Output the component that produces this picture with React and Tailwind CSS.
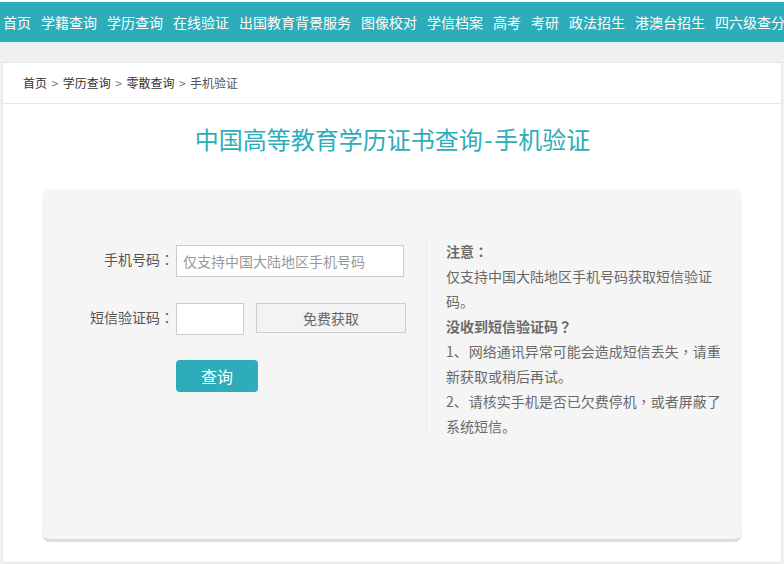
const nav = ["首页","学籍查询","学历查询","在线验证","出国教育背景服务","图像校对","学信档案","高考","考研","政法招生","港澳台招生","四六级查分"];
const font = { fontFamily: '"Noto Sans CJK SC", sans-serif' };

function P({ children }) {
  return <span className="font-['Noto_Sans_CJK_TC',sans-serif]">{children}</span>;
}

export default function App() {
  return (
    <div className="w-[784px] h-[564px] overflow-hidden bg-[#f0f0f0]" style={font}>
      <div className="h-[2px] bg-white" />
      <nav className="h-10 bg-[#2cadb9] flex items-center gap-[10px] pl-[3px] overflow-hidden whitespace-nowrap text-sm text-white">
        {nav.map((n) => (
          <a key={n} className="shrink-0 leading-10">{n}</a>
        ))}
      </nav>
      <div className="h-[2px] bg-[#e6f0f0]" />
      <main className="mt-[18px] ml-[2px] w-[780px] h-[501px] bg-white border border-[#e6e6e6]">
        <div className="h-[41px] border-b border-[#e6e6e6] flex items-center pl-5 text-xs text-[#333]">
          <span>首页</span>
          <span className="mx-[4.5px] text-[#777]">&gt;</span>
          <span>学历查询</span>
          <span className="mx-[4.5px] text-[#777]">&gt;</span>
          <span>零散查询</span>
          <span className="mx-[4.5px] text-[#777]">&gt;</span>
          <span className="text-[#555]">手机验证</span>
        </div>
        <h1 className="mt-[17px] text-center text-[24px] leading-[36px] text-[#2cadb9] pl-[1px]">中国高等教育学历证书查询<span className="px-[1.5px]">-</span>手机验证</h1>
        <section className="mt-[32px] mx-[39px] w-[700px] h-[353px] rounded-lg bg-[#f5f5f5] border-b-[3px] border-[#dddddd] flex pt-[56px] text-sm text-[#666]">
          <div className="w-[384px] shrink-0">
            <div className="flex items-center h-8">
              <label className="w-[132px] mr-[2px] pb-[5px] text-right text-[#555]">手机号码<P>：</P></label>
              <input className="w-[228px] h-8 border border-[#cccccc] bg-white px-[6px] outline-none placeholder:text-[#999] text-sm" placeholder="仅支持中国大陆地区手机号码" />
            </div>
            <div className="flex items-center h-8 mt-[26px]">
              <label className="w-[132px] mr-[2px] pb-[5px] text-right text-[#555]">短信验证码<P>：</P></label>
              <input className="w-[68px] h-8 border border-[#cccccc] bg-white outline-none" />
              <button className="ml-3 w-[150px] h-[30px] -mt-[2px] border border-[#cccccc] bg-[#f3f3f3] text-[#666] text-sm">免费获取</button>
            </div>
            <button className="block ml-[134px] mt-[25px] w-[82px] h-8 rounded bg-[#2cadb9] text-white text-base">查询</button>
          </div>
          <div className="w-[300px] h-[197px] -mt-[6px] border-l border-[#ececec] pl-[19px] leading-[25px] text-[#6a6a6a]">
            <p className="font-bold">注意<P>：</P></p>
            <p>仅支持中国大陆地区手机号码获取短信验证码。</p>
            <p className="font-bold">没收到短信验证码<P>？</P></p>
            <p><span className="mr-[1px]">1、</span><span>网络通讯异常可能会造成短信丢失</span><P>，</P><span>请重</span><span>新获取或稍后再试。</span></p>
            <p><span className="mr-[1px]">2、</span><span>请核实手机是否已欠费停机</span><P>，</P><span>或者屏蔽了</span><span>系统短信。</span></p>
          </div>
        </section>
      </main>
    </div>
  );
}
